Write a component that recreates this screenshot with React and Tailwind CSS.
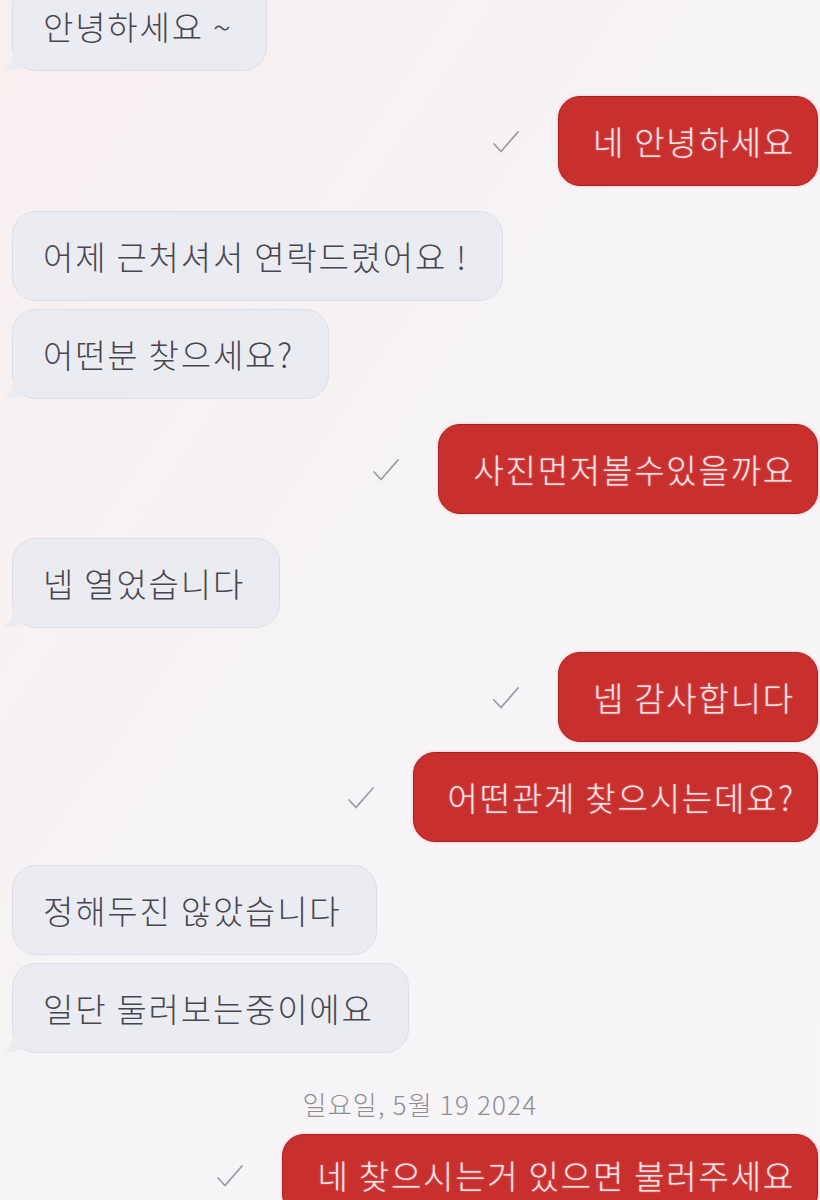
import React from 'react';

const messages = [
  { id: 1, side: 'in', text: '안녕하세요 ~', tail: true, mt: 'mt-[-19px]' },
  { id: 2, side: 'out', text: '네 안녕하세요', mt: 'mt-[25px]' },
  { id: 3, side: 'in', text: '어제 근처셔서 연락드렸어요 !', mt: 'mt-[25px]' },
  { id: 4, side: 'in', text: '어떤분 찾으세요?', tail: true, mt: 'mt-[8px]' },
  { id: 5, side: 'out', text: '사진먼저볼수있을까요', mt: 'mt-[25px]' },
  { id: 6, side: 'in', text: '넵 열었습니다', tail: true, mt: 'mt-[24px]' },
  { id: 7, side: 'out', text: '넵 감사합니다', mt: 'mt-[24px]' },
  { id: 8, side: 'out', text: '어떤관계 찾으시는데요?', mt: 'mt-[10px]' },
  { id: 9, side: 'in', text: '정해두진 않았습니다', mt: 'mt-[23px]' },
  { id: 10, side: 'in', text: '일단 둘러보는중이에요', tail: true, mt: 'mt-[8px]' },
];

const Check = () => (
  <svg width="28" height="24" viewBox="0 0 28 24" fill="none" className="shrink-0">
    <path d="M2 14 L9 21.5 L26 2" stroke="#9c9ca2" strokeWidth="1.8" strokeLinecap="round" strokeLinejoin="round" />
  </svg>
);

const Tail = () => (
  <svg width="22" height="22" viewBox="0 0 22 22" className="absolute left-[-9px] bottom-[-1px]">
    <path d="M10 0 C10 9 7 16 0 21 C8 22 14 20 18 17 L22 17 L22 0 Z" fill="#ebebf2" />
  </svg>
);

const Incoming = ({ text, tail, mt }) => (
  <div className={`flex justify-start pl-[12px] ${mt}`}>
    <div className="relative h-[90px] flex items-center rounded-[24px] bg-[#ebebf2] border border-[#dedee8] pl-[30px] pr-[34px] text-[#46464f]">
      {tail && <Tail />}
      <span className="relative text-[33px] font-light leading-none tracking-[1.8px]">{text}</span>
    </div>
  </div>
);

const Outgoing = ({ text, mt, tall = 'h-[90px]' }) => (
  <div className={`flex justify-end items-center pr-[2px] ${mt}`}>
    <div className="mr-[38px] mt-[2px]">
      <Check />
    </div>
    <div className={`${tall} flex items-center rounded-[22px] bg-[#c8302e] border border-[#a92222] shadow-[0_0_3px_rgba(240,140,150,0.6)] pl-[34px] pr-[22px] text-[#fde6e9]`}>
      <span className="text-[33px] font-light leading-none tracking-[1.8px] [text-shadow:0_0_2px_rgba(255,200,205,0.5)]">{text}</span>
    </div>
  </div>
);

export default function App() {
  return (
    <div
      className="w-[820px] h-[1200px] overflow-hidden bg-gradient-to-br from-[#f8efef] via-[#f6f4f6] to-[#f7f5f8]"
      style={{ fontFamily: '"Noto Sans CJK KR", "Noto Sans", sans-serif' }}
    >
      <div className="flex flex-col">
        {messages.map(m =>
          m.side === 'in'
            ? <Incoming key={m.id} text={m.text} tail={m.tail} mt={m.mt} />
            : <Outgoing key={m.id} text={m.text} mt={m.mt} />
        )}
        <div className="mt-[38px] flex justify-center pl-[20px] text-[26px] font-light leading-none tracking-[1.2px] text-[#8e8e93]">
          일요일, 5월 19 2024
        </div>
        <Outgoing text="네 찾으시는거 있으면 불러주세요" mt="mt-[17px]" tall="h-[82px]" />
      </div>
    </div>
  );
}
